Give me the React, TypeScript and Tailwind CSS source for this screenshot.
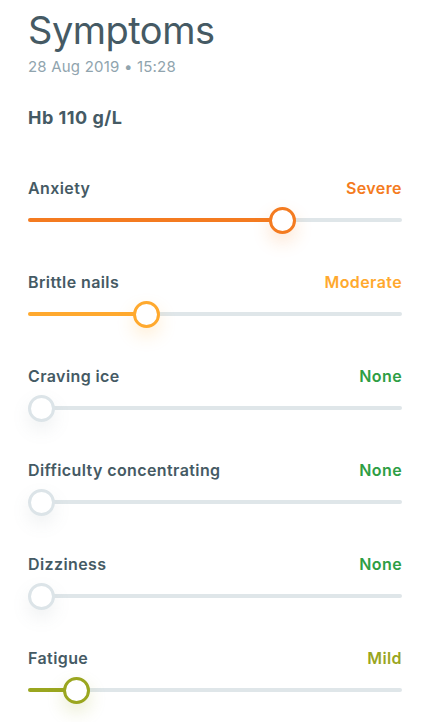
import React from "react";

type Symptom = {
  name: string;
  level: string;
  color: string;
  // thumb center, px from track start
  pos: number;
};

const symptoms: Symptom[] = [
  { name: "Anxiety", level: "Severe", color: "#f47b20", pos: 254 },
  { name: "Brittle nails", level: "Moderate", color: "#ffa92e", pos: 118 },
  { name: "Craving ice", level: "None", color: "#2e9e44", pos: 13 },
  { name: "Difficulty concentrating", level: "None", color: "#2e9e44", pos: 13 },
  { name: "Dizziness", level: "None", color: "#2e9e44", pos: 13 },
  { name: "Fatigue", level: "Mild", color: "#9aa61f", pos: 48 },
];

const Slider: React.FC<{ s: Symptom }> = ({ s }) => {
  const none = s.level === "None";
  const ring = none ? "#dce4e8" : s.color;
  return (
    <div className="flex items-center h-[28px] mt-[8px]">
      {!none && (
        <div
          className="h-[4px] rounded-l-full -mr-[2px]"
          style={{ width: s.pos - 11, backgroundColor: s.color }}
        />
      )}
      <div
        className="relative z-10 shrink-0 w-[27px] h-[27px] rounded-full bg-white border-[3px]"
        style={{
          borderColor: ring,
          boxShadow: `0 8px 18px ${none ? "rgba(120,140,150,0.12)" : s.color + "33"}`,
        }}
      />
      <div className="flex-1 h-[4px] rounded-r-full bg-[#dfe6e9] -ml-[2px]" />
    </div>
  );
};

export default function App() {
  return (
    <div
      className="w-[434px] h-[722px] overflow-hidden bg-white pl-7 pr-8 text-[#455a64]"
      style={{ fontFamily: "Inter, 'Noto Sans', sans-serif" }}
    >
      <h1 className="pt-[8px] text-[38px] leading-[44px] font-normal tracking-[-0.5px]">Symptoms</h1>
      <div className="mt-[5px] text-[15px] leading-[20px] text-[#90a4ae] tracking-[0.2px]">
        28 Aug 2019 • 15:28
      </div>
      <div className="mt-[29px] text-[18px] leading-[24px] font-bold tracking-[0.5px]">Hb 110 g/L</div>
      <div className="mt-[48px] flex flex-col gap-[38px]">
        {symptoms.map((s) => (
          <div key={s.name}>
            <div className="flex justify-between items-center h-[20px] text-[16px] font-semibold tracking-[0.4px]">
              <span>{s.name}</span>
              <span style={{ color: s.color }}>{s.level}</span>
            </div>
            <Slider s={s} />
          </div>
        ))}
      </div>
    </div>
  );
}
